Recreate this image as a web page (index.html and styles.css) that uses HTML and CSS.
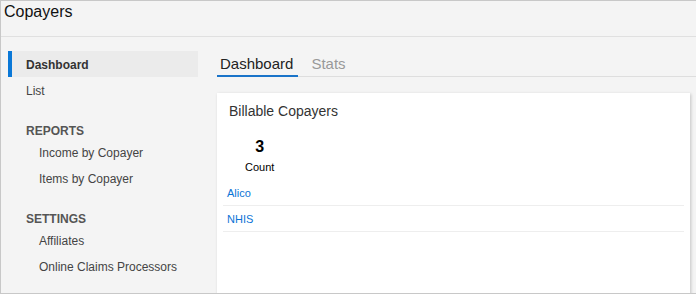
FILE: index.html
```html
<!DOCTYPE html>
<html lang="en">
<head>
    <meta charset="UTF-8">
    <meta name="viewport" content="width=device-width, initial-scale=1.0">
    <title>Copayers</title>
    <link rel="stylesheet" href="styles.css">
</head>
<body>
    <div class="frame">
        <div class="header">Copayers</div>
        <div class="layout">
            <div class="sidebar">
                <a class="nav-item active" href="#">Dashboard</a>
                <a class="nav-item" href="#">List</a>
                <div class="nav-heading">Reports</div>
                <a class="nav-item sub" href="#">Income by Copayer</a>
                <a class="nav-item sub" href="#">Items by Copayer</a>
                <div class="nav-heading">Settings</div>
                <a class="nav-item sub" href="#">Affiliates</a>
                <a class="nav-item sub" href="#">Online Claims Processors</a>
            </div>
            <div class="main">
                <div class="tabs">
                    <a class="tab active" href="#">Dashboard</a>
                    <a class="tab" href="#">Stats</a>
                </div>
                <div class="card">
                    <div class="card-title">Billable Copayers</div>
                    <div class="stat">
                        <div class="stat-value">3</div>
                        <div class="stat-label">Count</div>
                    </div>
                    <ul class="copayer-list">
                        <li><a href="#">Alico</a></li>
                        <li><a href="#">NHIS</a></li>
                    </ul>
                </div>
            </div>
        </div>
    </div>
</body>
</html>
```

FILE: styles.css
```css
body {
    margin: 0;
    font-family: "Liberation Sans", Arial, sans-serif;
    background-color: #f4f4f4;
    overflow: hidden;
}
.frame {
    height: 292px;
    border: 1px solid #c8c8c8;
    border-right: none;
    background-color: #f4f4f4;
    overflow: hidden;
}
.header {
    height: 34px;
    padding: 1px 0 0 3px;
    font-size: 16px;
    line-height: 20px;
    color: #111;
    border-bottom: 1px solid #e0e0e0;
}
.layout {
    display: flex;
}
.sidebar {
    width: 190px;
    padding: 14px 0 0 7px;
    flex-shrink: 0;
}
.nav-item {
    display: block;
    height: 26px;
    line-height: 28px;
    padding-left: 14px;
    border-left: 4px solid transparent;
    font-size: 12px;
    color: #444;
    text-decoration: none;
}
.nav-item.active {
    border-left-color: #0a78d7;
    background-color: #ebebeb;
    font-weight: bold;
    color: #333;
}
.nav-item.sub {
    padding-left: 27px;
}
.nav-heading {
    padding: 19px 0 0 18px;
    height: 17px;
    line-height: 18px;
    font-size: 12px;
    font-weight: bold;
    text-transform: uppercase;
    color: #555;
}
.main {
    flex: 1;
    margin-left: 19px;
    padding-top: 14px;
}
.tabs {
    display: flex;
    border-bottom: 1px solid #dedede;
}
.tab {
    padding: 1px 5px 0 3px;
    margin-right: 10px;
    margin-bottom: -1px;
    line-height: 23px;
    font-size: 15px;
    color: #999;
    text-decoration: none;
    border-bottom: 2px solid transparent;
}
.tab.active {
    color: #222;
    border-bottom-color: #1a74c9;
}
.card {
    margin: 16px 6px 0 0;
    height: 240px;
    padding: 9px 12px 8px;
    background-color: white;
    box-shadow: 1px 1px 3px rgba(0,0,0,0.2);
}
.card-title {
    font-size: 14px;
    line-height: 18px;
    color: #333;
}
.stat {
    display: inline-block;
    margin-top: 17px;
    padding: 0 16px;
    text-align: center;
    color: #000;
}
.stat-value {
    font-size: 16px;
    font-weight: bold;
    line-height: 20px;
}
.stat-label {
    font-size: 11px;
    line-height: 21px;
}
.copayer-list {
    list-style: none;
    margin: 2px -6px 0;
    padding: 0;
}
.copayer-list li {
    height: 25px;
    line-height: 27px;
    padding-left: 4px;
    border-bottom: 1px solid #eee;
    font-size: 11px;
}
.copayer-list a {
    color: #0a74d6;
    text-decoration: none;
}
```
